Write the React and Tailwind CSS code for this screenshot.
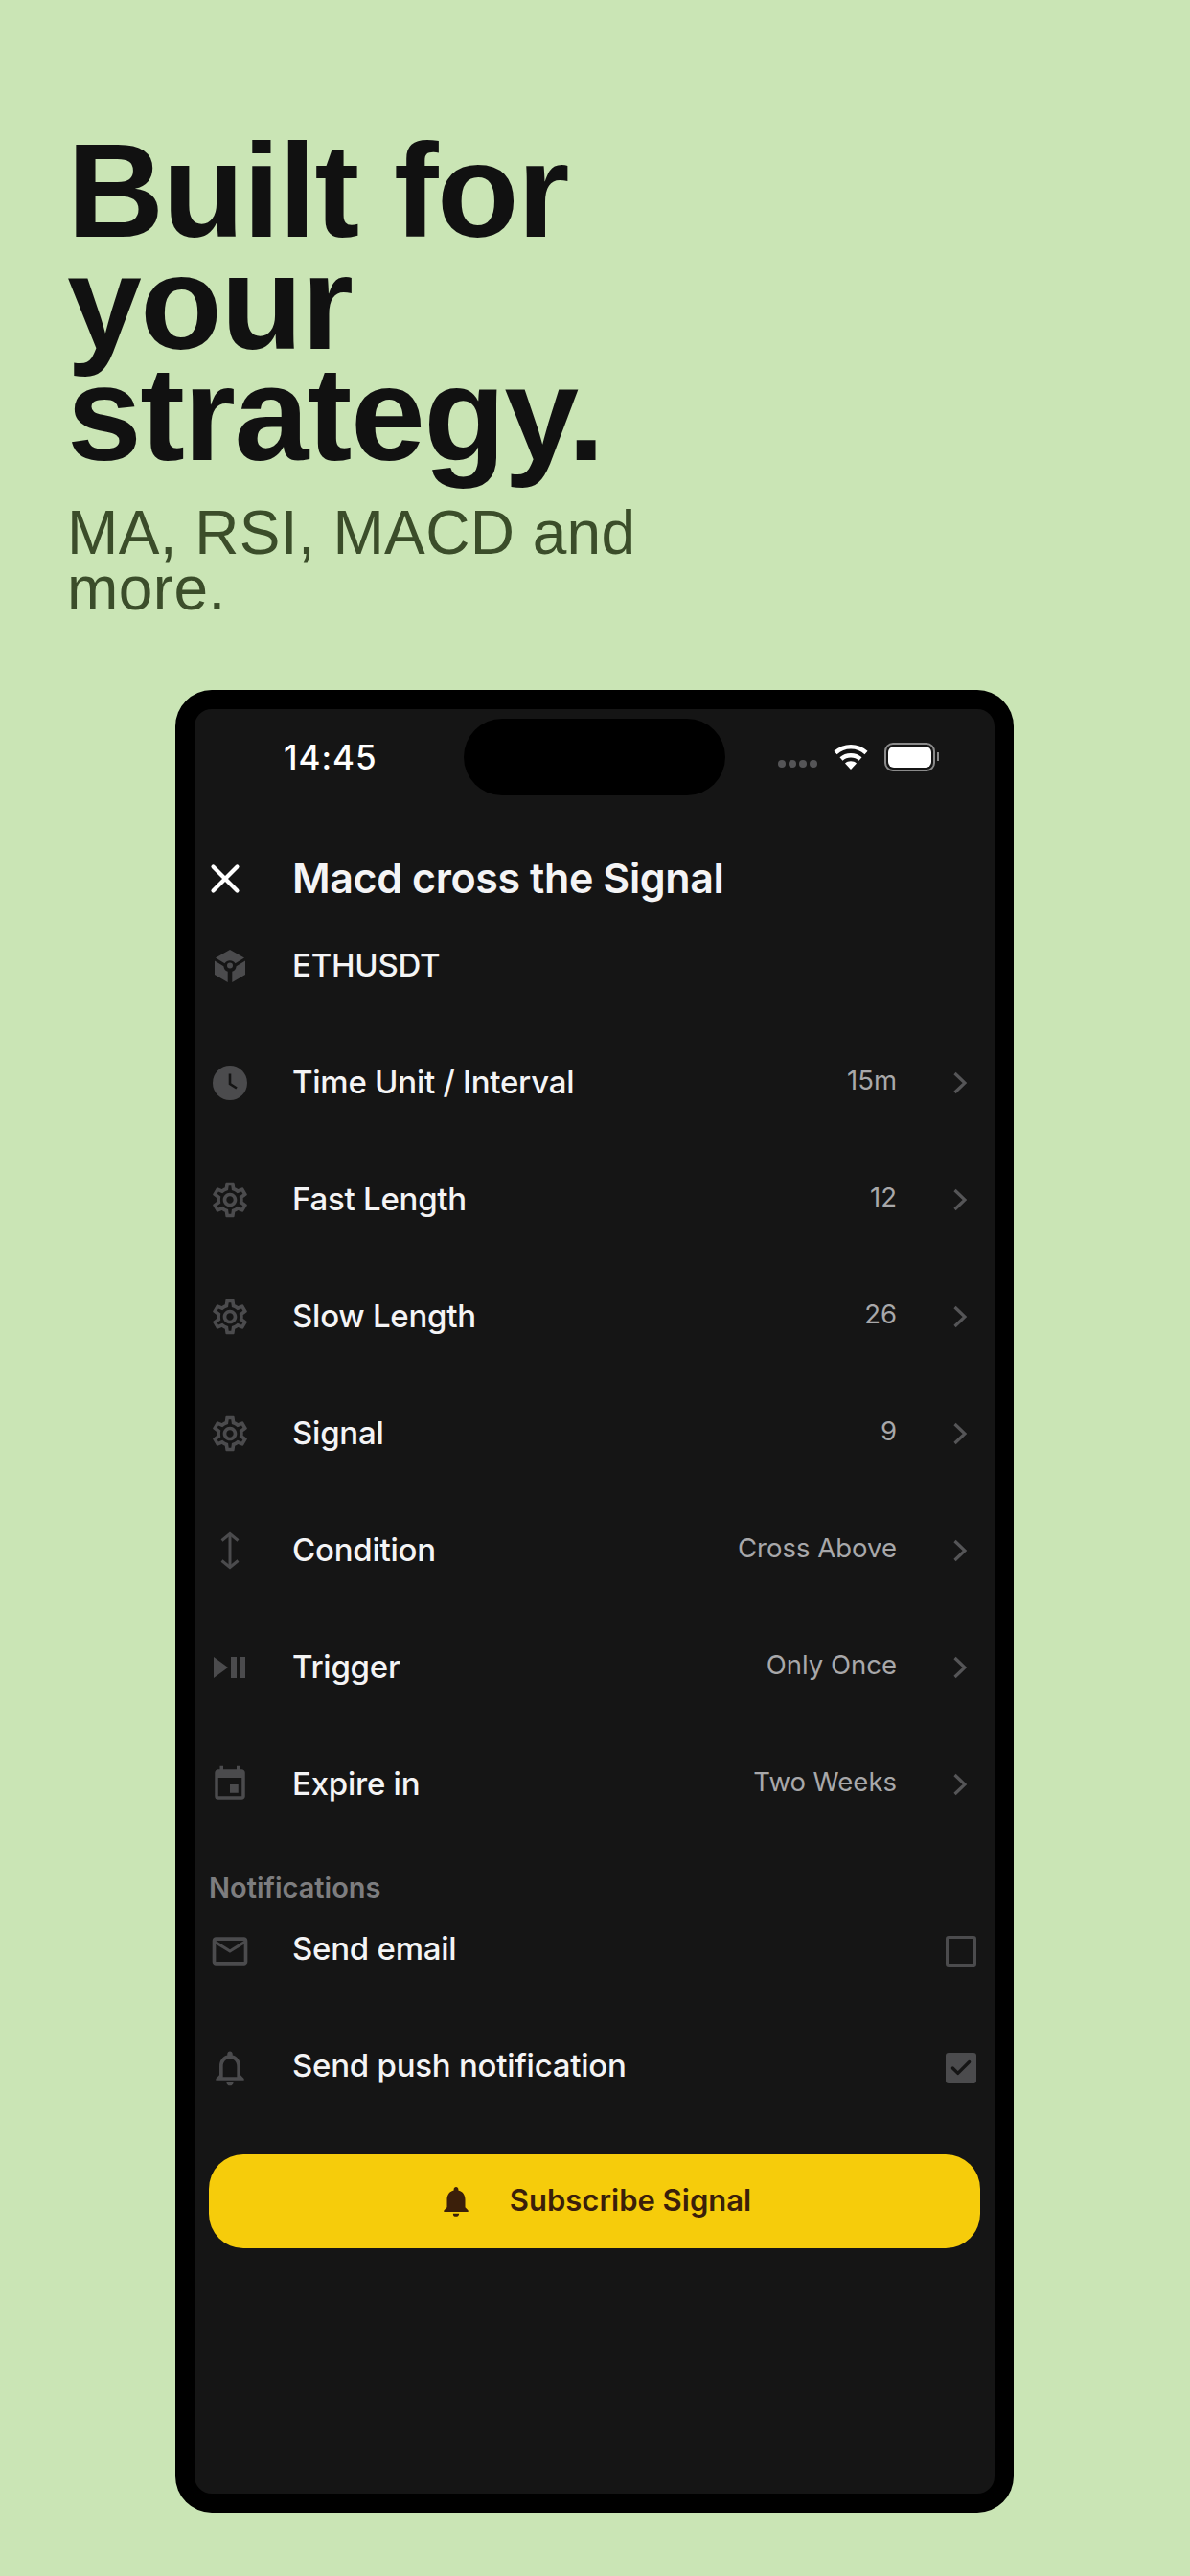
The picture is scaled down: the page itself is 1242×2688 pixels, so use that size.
import React from 'react';
import { MdOutlineSettings, MdEvent, MdMailOutline, MdNotificationsNone, MdNotifications } from 'react-icons/md';
import { Check, X } from 'lucide-react';

const iconGray = 'text-[#4b4b4d]';

function CubeIcon() {
  return (
    <svg viewBox="0 0 36 36" className={`w-[36px] h-[36px] ${iconGray}`} fill="currentColor">
      <path d="M18 1 33 9.500 23.500 15.200A6.600 6.600 0 0 0 12.500 15.200L3 9.500Z" />
      <path d="M2 12.500 11.400 18.200C11.600 20.800 13 22.800 15.700 23.800V35L2 27Z" />
      <path d="M34 12.500 24.600 18.200C24.400 20.800 23 22.800 20.300 23.800V35L34 27Z" />
      <circle cx="18" cy="17.500" r="3" />
    </svg>
  );
}

function ClockIcon() {
  return (
    <svg viewBox="0 0 36 36" className={`w-[36px] h-[36px] ${iconGray}`}>
      <circle cx="18" cy="18" r="18" fill="currentColor" />
      <path d="M18 8.500V19L25 23.500" fill="none" stroke="#141414" strokeWidth="2.600" />
    </svg>
  );
}

function PlayPauseIcon() {
  return (
    <svg viewBox="0 0 34 22" className={`w-[34px] h-[22px] ${iconGray}`} fill="currentColor">
      <path d="M0 0 15 11 0 22Z" />
      <rect x="18" y="0" width="6" height="22" />
      <rect x="27" y="0" width="6" height="22" />
    </svg>
  );
}

function UpDownIcon() {
  return (
    <svg viewBox="0 0 20 40" className={`w-[20px] h-[40px] ${iconGray}`} fill="none" stroke="currentColor" strokeWidth="3">
      <path d="M1.500 9.500 10 2.500 18.500 9.500" />
      <path d="M1.500 30.500 10 37.500 18.500 30.500" />
      <path d="M10 3V37" />
    </svg>
  );
}

function Chevron() {
  return (
    <svg viewBox="0 0 14 24" className="ml-[59px] mr-[14px] w-[14px] h-[24px] text-[#555557]" fill="none" stroke="currentColor" strokeWidth="3.200">
      <path d="M1.500 2 12 12 1.500 22" />
    </svg>
  );
}

const gear = <MdOutlineSettings className={`w-[44px] h-[44px] ${iconGray}`} />;

const rows = [
  { icon: <ClockIcon />, label: 'Time Unit / Interval', value: '15m' },
  { icon: gear, label: 'Fast Length', value: '12' },
  { icon: gear, label: 'Slow Length', value: '26' },
  { icon: gear, label: 'Signal', value: '9' },
  { icon: <UpDownIcon />, label: 'Condition', value: 'Cross Above' },
  { icon: <PlayPauseIcon />, label: 'Trigger', value: 'Only Once' },
  { icon: <MdEvent className={`w-[42px] h-[42px] ${iconGray}`} />, label: 'Expire in', value: 'Two Weeks' },
];

function Row({ icon, label, value }) {
  return (
    <div className="h-[122px] flex items-center">
      <div className="w-[44px] mr-[43px] flex justify-center">{icon}</div>
      <span className="flex-1 text-[33px] font-medium text-[#f4f4f5] tracking-[-0.25px]">{label}</span>
      {value && <span className="text-[27.500px] text-[#a8a8aa] -mt-[3px]">{value}</span>}
      {value && <Chevron />}
    </div>
  );
}

export default function App() {
  return (
    <div className="w-[1242px] h-[2688px] bg-[#cae5b5] overflow-hidden font-['Liberation_Sans',Arial,sans-serif]">
      <div className="pt-[141px] pl-[70px]">
        <h1 className="text-[140px] leading-[116.500px] font-bold text-[#111111] tracking-[-1.500px]">
          Built for
          <br />
          your
          <br />
          strategy.
        </h1>
        <p className="mt-[36px] text-[64px] leading-[58.500px] tracking-[0.4px] text-[#3b4d2a]">
          MA, RSI, MACD and
          <br />
          more.
        </p>
      </div>

      <div className="ml-[183px] mt-[76px] w-[875px] h-[1902px] bg-black rounded-[38px] p-[20px]">
        <div className="h-full bg-[#151515] rounded-[18px] pt-[10px] font-['Inter',sans-serif]">
          {/* status bar */}
          <div className="h-[80px] flex items-center">
            <div className="w-[281px] pl-[93px] pt-[2px] text-[35px] font-medium text-white tracking-[1px]">14:45</div>
            <div className="w-[273px] h-[80px] rounded-[40px] bg-black" />
            <div className="flex items-center pl-[55px]">
              <div className="flex gap-[3px] mt-[14px]">
                <div className="w-[8px] h-[8px] rounded-full bg-[#555557]" />
                <div className="w-[8px] h-[8px] rounded-full bg-[#555557]" />
                <div className="w-[8px] h-[8px] rounded-full bg-[#555557]" />
                <div className="w-[8px] h-[8px] rounded-full bg-[#555557]" />
              </div>
              <svg viewBox="0 0 36 28" className="ml-[17px] w-[36px] h-[28px]" fill="none" stroke="white" strokeWidth="4.500">
                <path d="M2 9.500C11 1 25 1 34 9.500" />
                <path d="M8 16C13.500 11 22.500 11 28 16" />
                <path d="M18 27 12 20.500C15 17.500 21 17.500 24 20.500Z" fill="white" stroke="none" />
              </svg>
              <div className="ml-[17px] w-[53px] h-[30px] rounded-[9px] border-2 border-[#8a8a8a] p-[2px]">
                <div className="w-full h-full bg-white rounded-[6px]" />
              </div>
              <div className="ml-[2px] w-[2px] h-[9px] bg-[#8a8a8a]" />
            </div>
          </div>

          <div className="px-[15px]">
            {/* header */}
            <div className="mt-[57px] h-[60px] flex items-center">
              <div className="w-[87px]">
                <X className="w-[50px] h-[50px] -ml-[8px] text-white" strokeWidth={2} />
              </div>
              <span className="text-[43px] font-semibold text-[#f4f4f5] tracking-[-0.4px]">Macd cross the Signal</span>
            </div>

            <Row icon={<CubeIcon />} label="ETHUSDT" />
            {rows.map((row) => (
              <Row key={row.label} {...row} />
            ))}

            {/* notifications */}
            <div className="pt-[27px] h-[73px] text-[29px] leading-[40px] font-semibold text-[#7d7d7f]">Notifications</div>
            <div className="h-[80px] flex items-center">
              <div className="w-[44px] mr-[43px] flex justify-center">
                <MdMailOutline className={`w-[46px] h-[46px] ${iconGray}`} />
              </div>
              <span className="flex-1 text-[33px] font-medium text-[#f4f4f5] tracking-[-0.25px] -mt-[3px]">Send email</span>
              <div className="mr-[4px] w-[32px] h-[32px] rounded-[3px] border-[3px] border-[#4b4b4d]" />
            </div>
            <div className="mt-[42px] h-[80px] flex items-center">
              <div className="w-[44px] mr-[43px] flex justify-center">
                <MdNotificationsNone className={`w-[46px] h-[46px] ${iconGray}`} />
              </div>
              <span className="flex-1 text-[33px] font-medium text-[#f4f4f5] tracking-[-0.25px] -mt-[3px]">Send push notification</span>
              <div className="mr-[4px] w-[32px] h-[32px] rounded-[3px] bg-[#4b4b4d] flex items-center justify-center">
                <Check className="w-[26px] h-[26px] text-[#151515]" strokeWidth={3} />
              </div>
            </div>

            <button className="mt-[50px] w-[805px] h-[98px] rounded-[36px] bg-[#f6cc0b] flex items-center justify-center gap-[37px] text-[#3b1f0a]">
              <MdNotifications className="w-[38px] h-[38px]" />
              <span className="text-[31px] font-semibold">Subscribe Signal</span>
            </button>
          </div>
        </div>
      </div>
    </div>
  );
}
